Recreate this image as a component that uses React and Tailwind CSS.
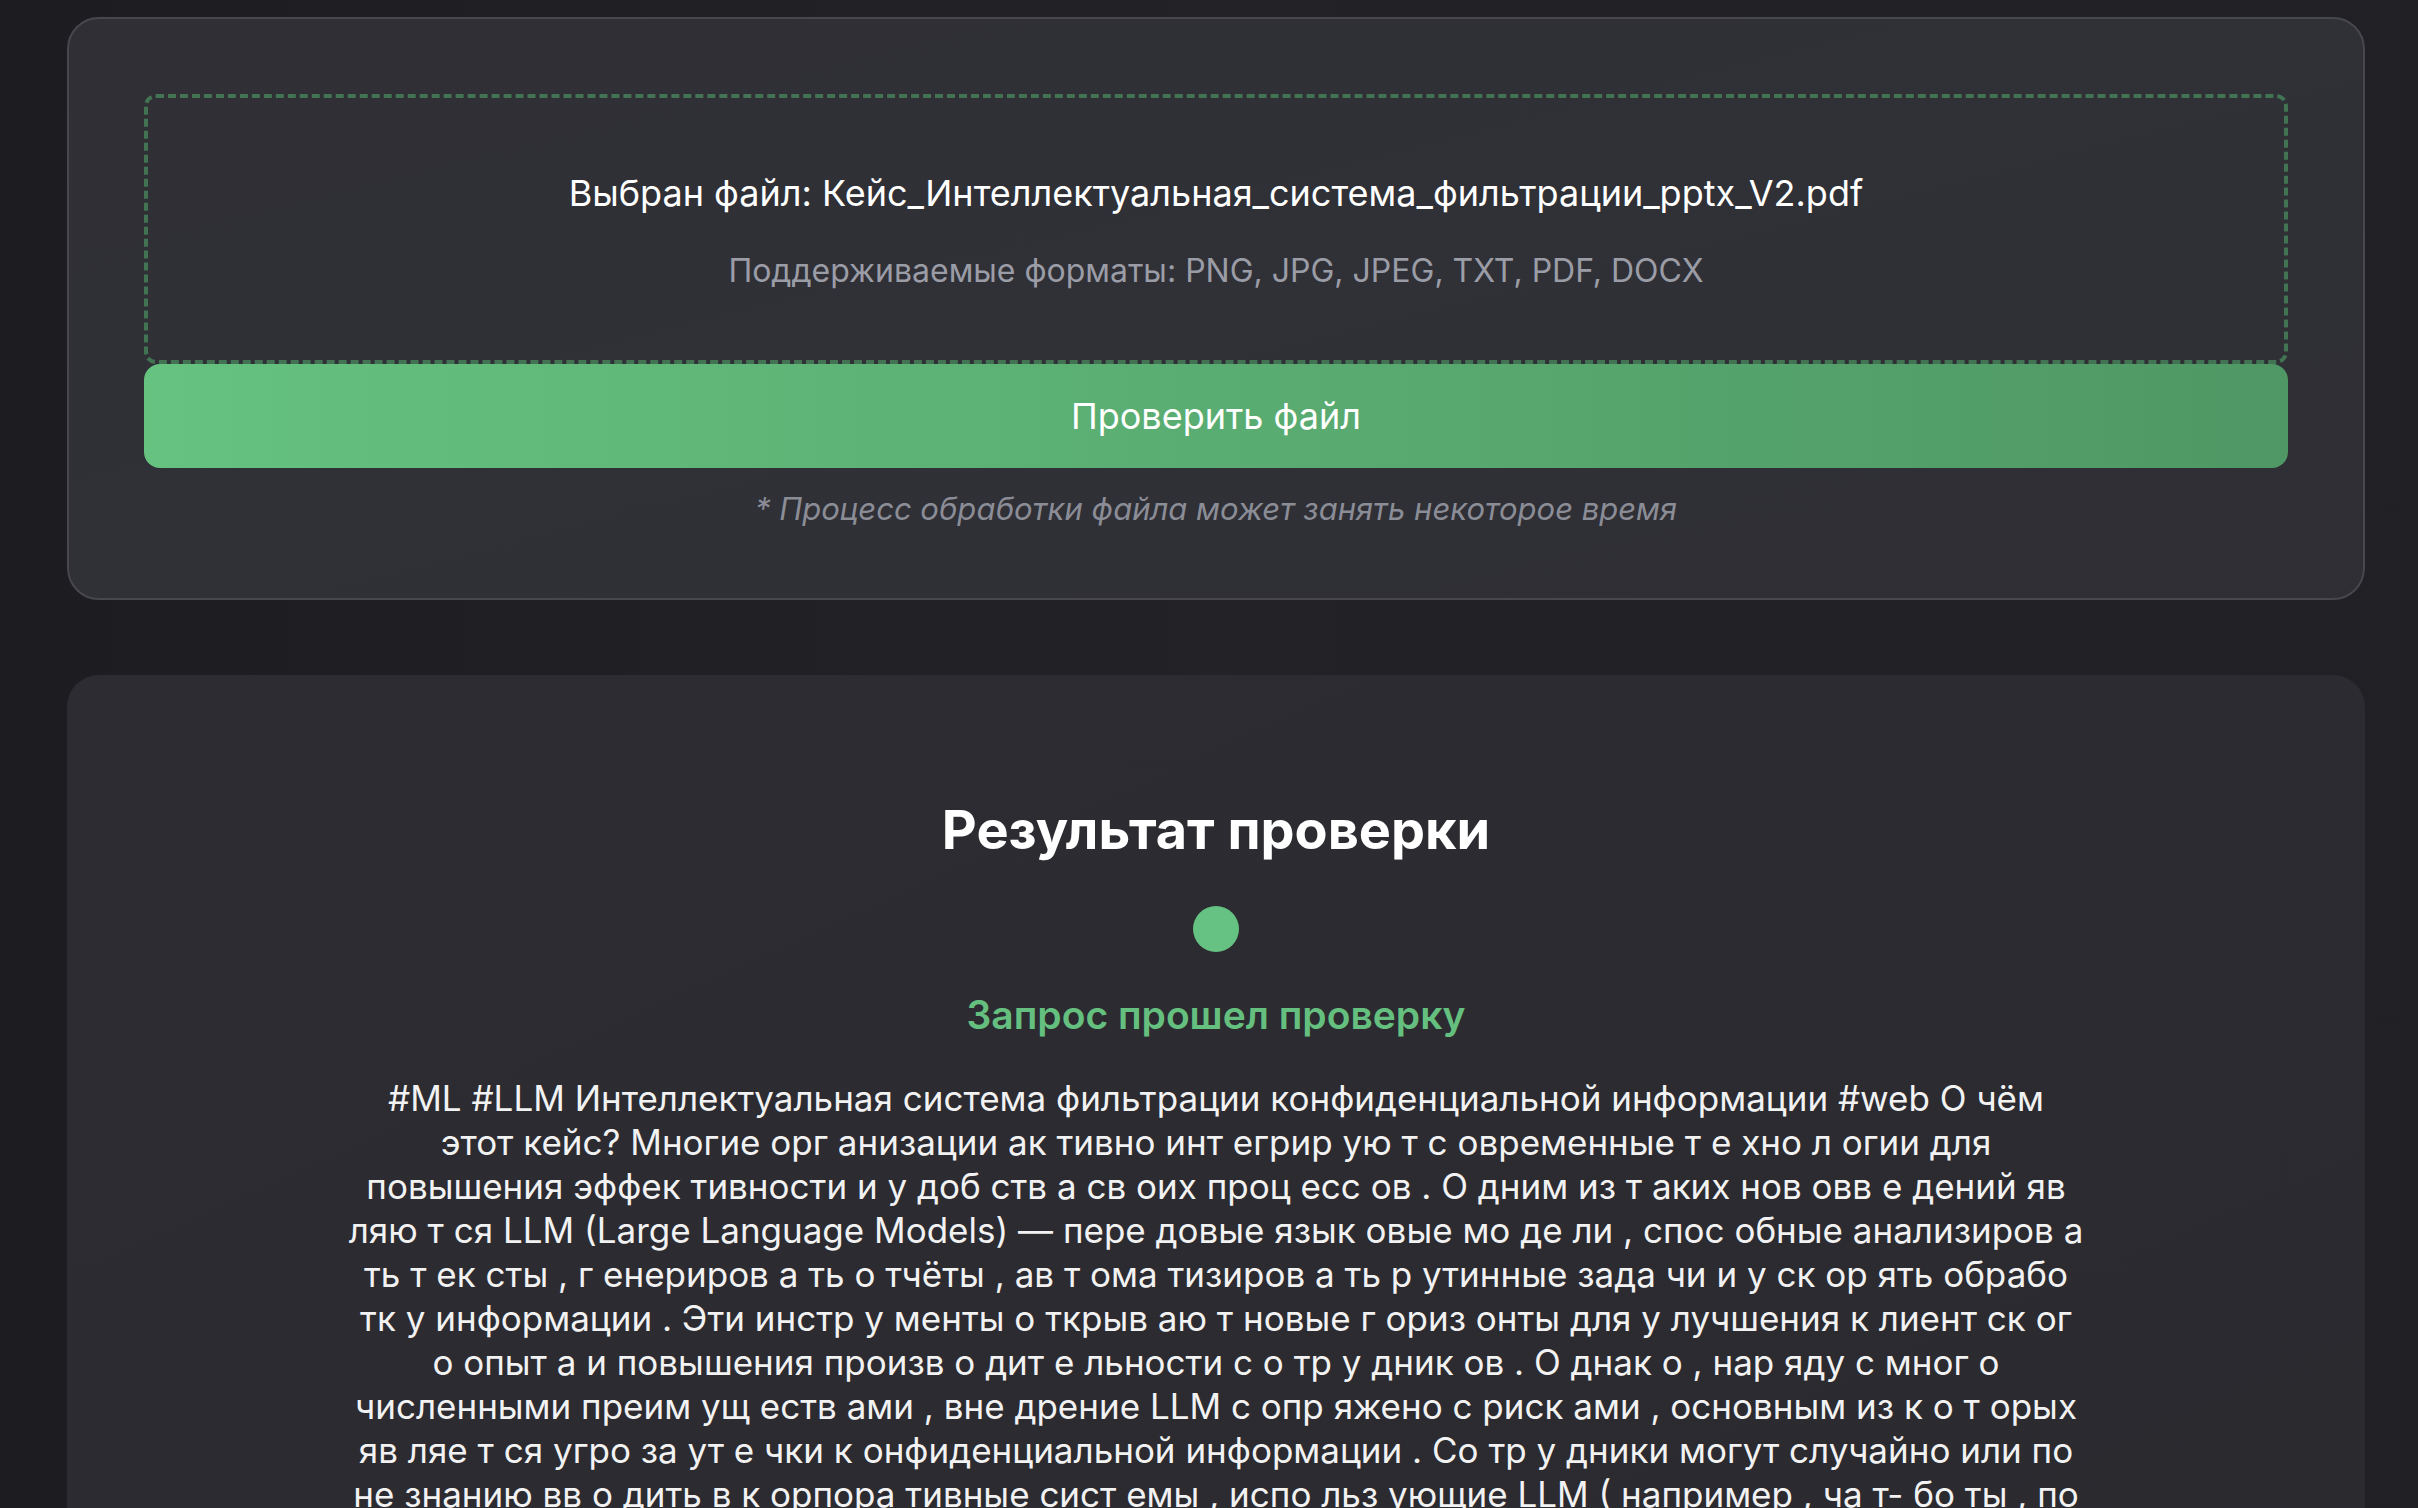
import React from 'react';

// File check page: upload card + result card
const resultLines = [
  '#ML #LLM Интеллектуальная система фильтрации конфиденциальной информации #web О чём',
  'этот кейс? Многие орг анизации ак тивно инт егрир ую т с овременные т е хно л огии для',
  'повышения эффек тивности и у доб ств а св оих проц есс ов . О дним из т аких нов овв е дений яв',
  'ляю т ся LLM (Large Language Models) — пере довые язык овые мо де ли , спос обные анализиров а',
  'ть т ек сты , г енериров а ть о тчёты , ав т ома тизиров а ть р утинные зада чи и у ск ор ять обрабо',
  'тк у информации . Эти инстр у менты о ткрыв аю т новые г ориз онты для у лучшения к лиент ск ог',
  'о опыт а и повышения произв о дит е льности с о тр у дник ов . О днак о , нар яду с мног о',
  'численными преим ущ еств ами , вне дрение LLM с опр яжено с риск ами , основным из к о т орых',
  'яв ляе т ся угро за ут е чки к онфиденциальной информации . Со тр у дники могут случайно или по',
  'не знанию вв о дить в к орпора тивные сист емы , испо льз ующие LLM ( например , ча т- бо ты , по',
  'мощники ) , конфиденциальные данные : персональную информацию клиент ов , финансовые',
  'о тчёты и коммерческие тайны .',
];

const UploadCard = () => (
  <div className="rounded-[32px] border-2 border-[#47474d] bg-gradient-to-br from-[#2f2f35] via-[#303037] to-[#2e2e34] px-[75px] pt-[75px] pb-[70px]">
    <div className="rounded-[12px] border-4 border-dashed border-[#427352] px-8 pt-[74px] pb-[70px] text-center">
      <p className="text-[36px] leading-[43px] text-white">
        Выбран файл: Кейс_Интеллектуальная_система_фильтрации_pptx_V2.pdf
      </p>
      <p className="mt-[37px] text-[32px] leading-[38px] text-[#9b9da6]">
        Поддерживаемые форматы: PNG, JPG, JPEG, TXT, PDF, DOCX
      </p>
    </div>
    <button className="flex h-[104px] w-full items-center justify-center rounded-[16px] bg-gradient-to-r from-[#65c27f] to-[#4f9865] text-[36px] text-white">
      Проверить файл
    </button>
    <p className="mt-[22px] text-center text-[31px] italic leading-[38px] text-[#8b8d96]">
      * Процесс обработки файла может занять некоторое время
    </p>
  </div>
);

const ResultCard = () => (
  <div className="mt-[75px] rounded-[32px] bg-gradient-to-br from-[#2c2c32] to-[#2a2a2f] px-[75px] pt-[123px] pb-[120px]">
    <h2 className="text-center text-[54px] font-bold leading-[64px] text-white">Результат проверки</h2>
    <div className="mx-auto mt-[44px] h-[46px] w-[46px] rounded-full bg-[#66c282]" />
    <p className="mt-[40px] text-center text-[39px] font-semibold leading-[46px] text-[#65c07f]">
      Запрос прошел проверку
    </p>
    <p className="mx-auto mt-[38px] max-w-[1760px] text-center text-[35px] leading-[44px] text-[#f2f2f3]">
      {resultLines.map((line, i) => (
        <span key={i} className="block whitespace-nowrap">
          {line}
        </span>
      ))}
    </p>
  </div>
);

export default function App() {
  return (
    <div
      className="min-h-screen bg-gradient-to-r from-[#1d1d21] via-[#222227] to-[#202025] pt-[17px] pb-[60px]"
      style={{ fontFamily: 'Inter, "Noto Sans", sans-serif' }}
    >
      <div className="ml-[67px] w-[2298px]">
        <UploadCard />
        <ResultCard />
      </div>
    </div>
  );
}
